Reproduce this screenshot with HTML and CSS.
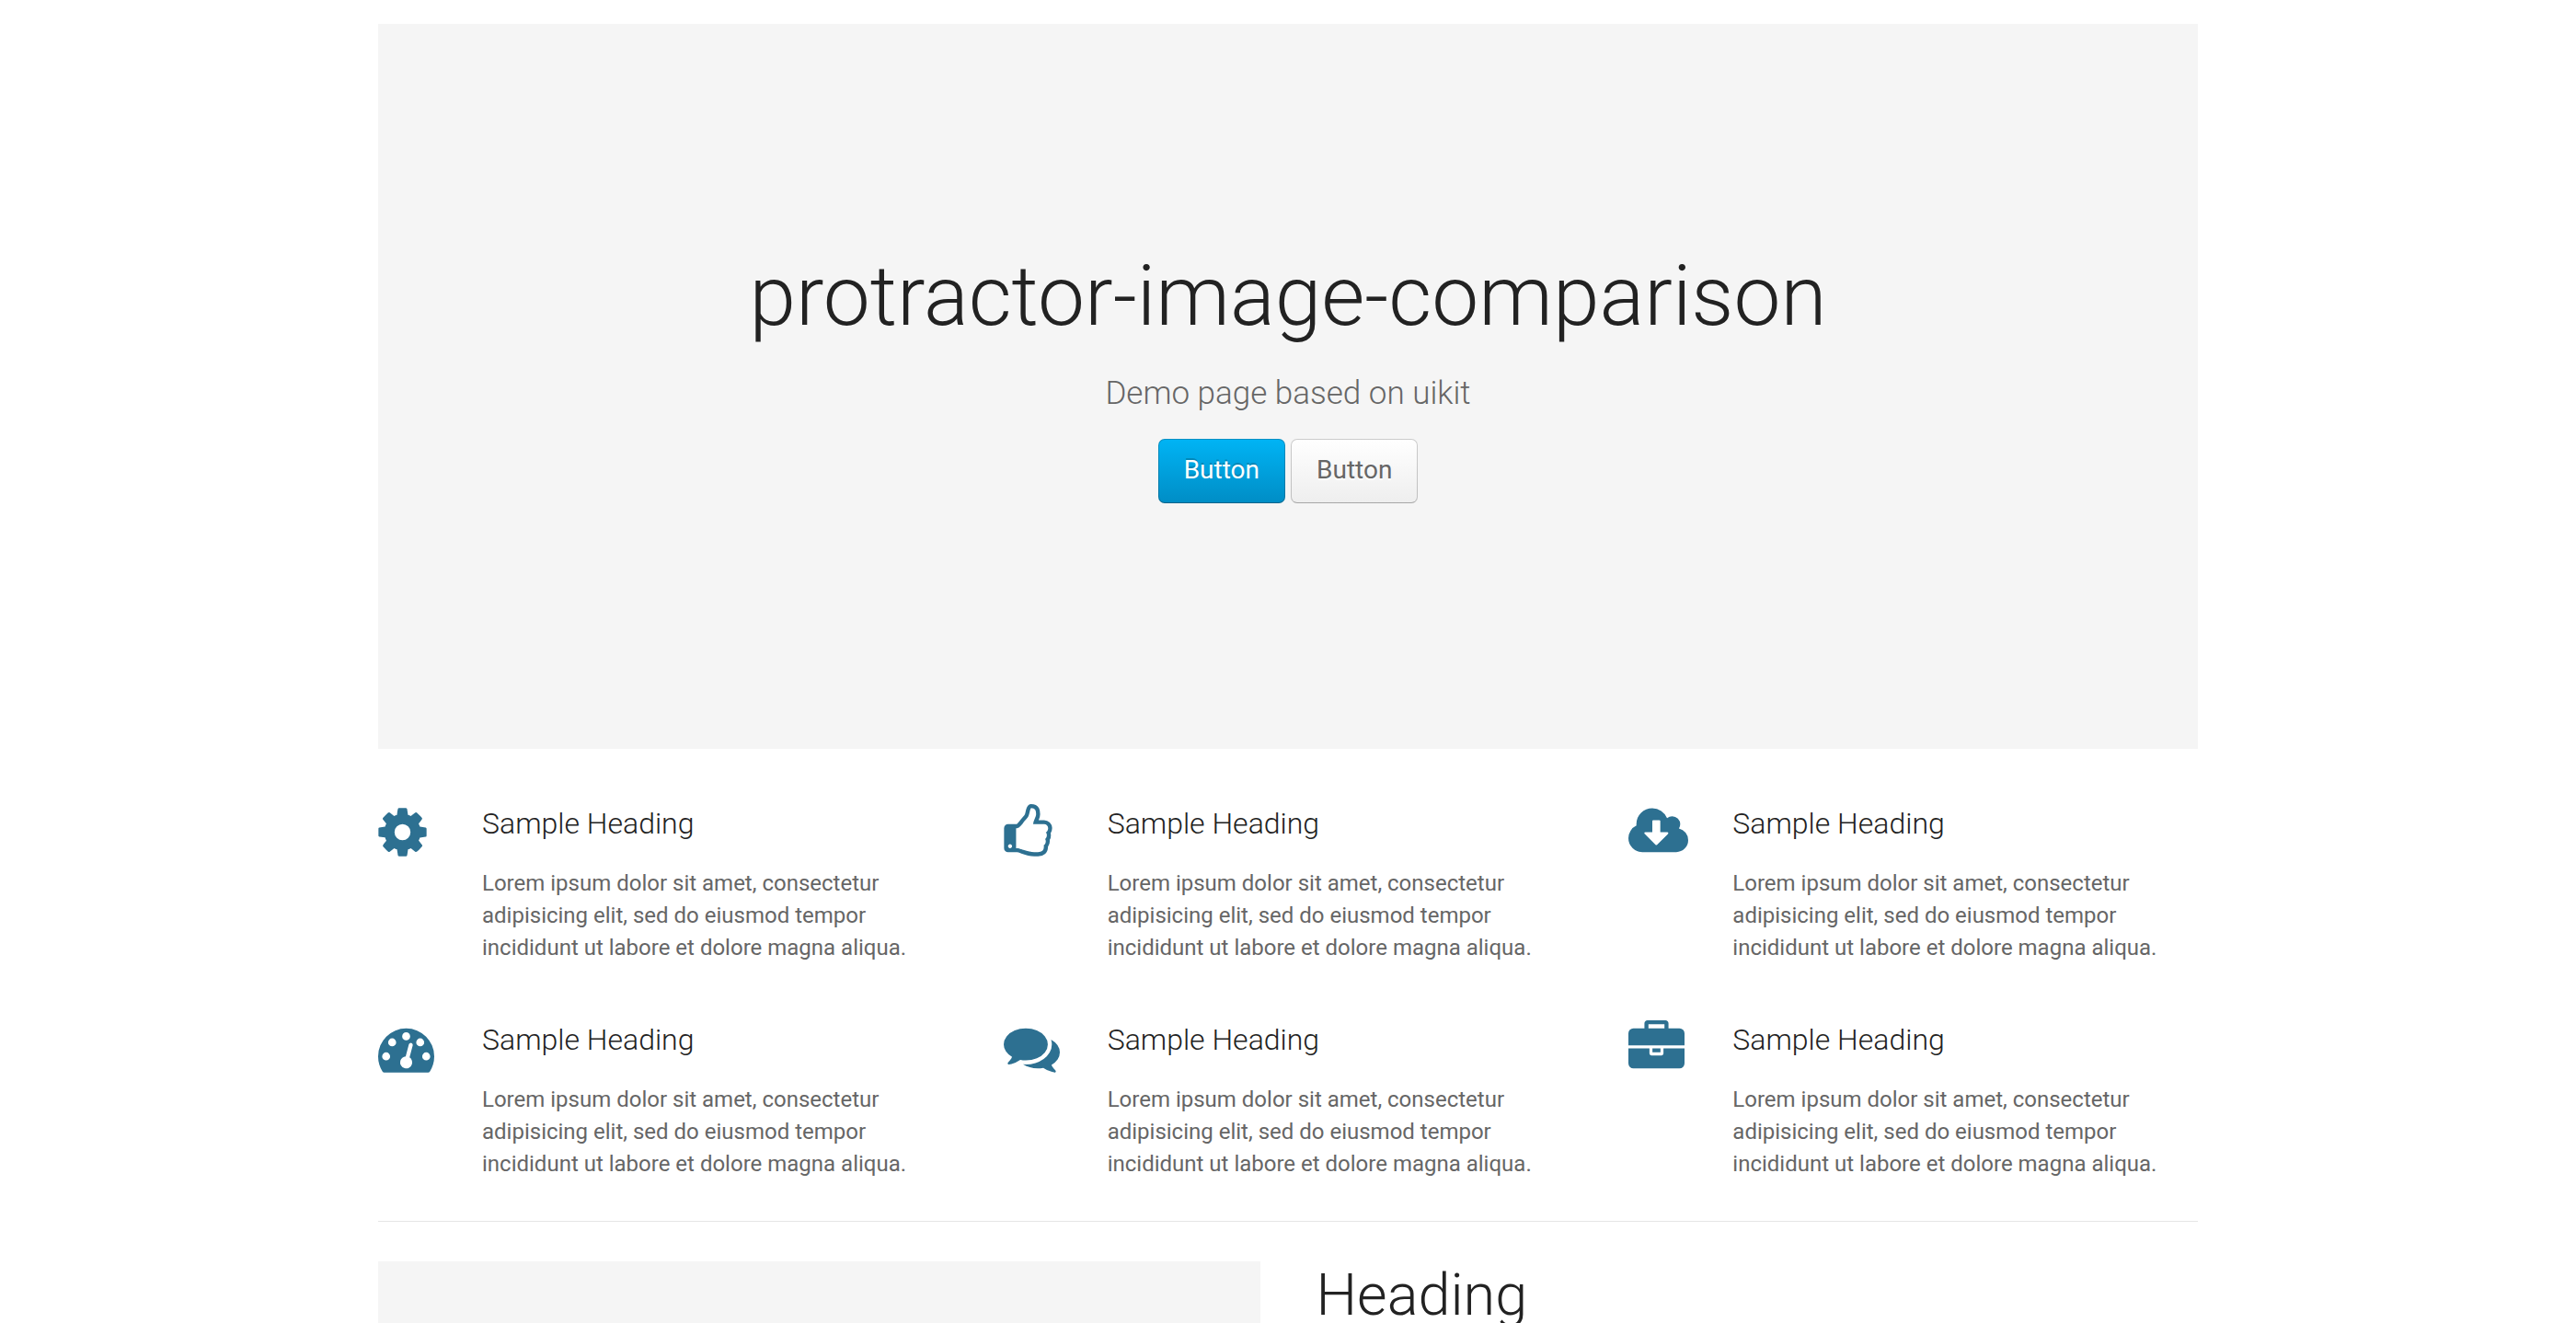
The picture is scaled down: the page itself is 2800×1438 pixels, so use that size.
FILE: index.html
```html
<!DOCTYPE html>
<html lang="en">
<head>
<meta charset="utf-8">
<title>protractor-image-comparison</title>
<link rel="stylesheet" href="styles.css">
</head>
<body>
<svg class="sprite" aria-hidden="true">
  <symbol id="cog" viewBox="128 0 1536 1792"><path d="M1152 896q0-106-75-181t-181-75-181 75-75 181 75 181 181 75 181-75 75-181zm512-109v222q0 12-8 23t-20 13l-185 28q-19 54-39 91 35 50 107 138 10 12 10 25t-9 23q-27 37-99 108t-94 71q-12 0-26-9l-138-108q-44 23-91 38-16 136-29 186-7 28-36 28h-222q-14 0-24.500-8.500t-11.500-21.500l-28-184q-49-16-90-37l-141 107q-10 9-25 9-14 0-25-11-126-114-165-168-7-10-7-23 0-12 8-23 15-21 51-66.500t54-70.500q-27-50-41-99l-183-27q-13-2-21-12.500t-8-23.500v-222q0-12 8-23t19-13l186-28q14-46 39-92-40-57-107-138-10-12-10-24 0-10 9-23 26-36 98.500-107.500t94.500-71.500q13 0 26 10l138 107q44-23 91-38 16-136 29-186 7-28 36-28h222q14 0 24.500 8.500t11.500 21.500l28 184q49 16 90 37l142-107q9-9 24-9 13 0 25 10 129 119 165 170 7 8 7 22 0 12-8 23-15 21-51 66.500t-54 70.500q26 50 41 98l183 28q13 2 21 12.500t8 23.500z"/></symbol>
  <symbol id="thumbs-up" viewBox="128 0 1536 1792"><path d="M384 1344q0-26-19-45t-45-19-45 19-19 45 19 45 45 19 45-19 19-45zm1152-576q0-51-39-89.500t-89-38.500h-352q0-58 48-159.500t48-160.500q0-98-32-145t-128-47q-26 26-38 85t-30.500 125.500-59.500 109.500q-22 23-77 91-4 5-23 30t-31.500 41-34.500 42.500-40 44-38.500 35.500-40 27-35.500 9h-32v640h32q13 0 31.500 3t33 6.500 38 11 35 11.500 35.500 12.500 29 10.500q211 73 342 73h121q192 0 192-167 0-26-5-56 30-16 47.500-52.500t17.500-73.500-18-69q53-50 53-119 0-25-10-55.500t-25-47.500q32-1 53.500-47t21.500-81zm128-1q0 89-49 163 9 33 9 69 0 77-38 144 3 21 3 43 0 101-60 178 1 139-85 219.500t-227 80.500h-129q-96 0-189.500-22.500t-216.500-65.500q-116-40-138-40h-288q-53 0-90.500-37.500t-37.500-90.500v-640q0-53 37.500-90.500t90.500-37.500h274q36-24 137-155 58-75 107-128 24-25 35.500-85.500t30.500-126.500 62-108q39-37 90-37 84 0 151 32.500t102 101.500 35 186q0 93-48 192h176q104 0 180 76t76 179z"/></symbol>
  <symbol id="cloud-download" viewBox="0 0 1920 1792"><path d="M1280 928q0-14-9-23t-23-9h-224v-352q0-13-9.500-22.500t-22.500-9.500h-192q-13 0-22.500 9.500t-9.500 22.500v352h-224q-13 0-22.500 9.500t-9.500 22.500q0 14 9 23l352 352q9 9 23 9t23-9l351-351q10-12 10-24zm640 224q0 159-112.500 271.500t-271.500 112.500h-1088q-185 0-316.500-131.500t-131.500-316.500q0-130 70-240t188-165q-2-30-2-43 0-212 150-362t362-150q156 0 285.500 87t188.500 231q71-62 166-62 106 0 181 75t75 181q0 76-41 138 130 31 213.500 135.500t83.500 238.500z"/></symbol>
  <symbol id="dashboard" viewBox="0 0 1792 1792"><path d="M384 1152q0-53-37.500-90.500t-90.500-37.500-90.500 37.500-37.500 90.500 37.500 90.500 90.500 37.500 90.500-37.500 37.500-90.500zm192-448q0-53-37.500-90.500t-90.500-37.500-90.500 37.500-37.500 90.500 37.500 90.500 90.500 37.500 90.500-37.500 37.500-90.500zm428 481l101-382q6-26-7.500-48.500t-38.500-29.500-48 6.500-30 39.500l-101 382q-60 5-107 43.500t-63 98.500q-20 77 20 146t117 89 146-20 89-117q16-60-6-117t-72-91zm660-33q0-53-37.500-90.500t-90.500-37.500-90.500 37.500-37.500 90.500 37.500 90.500 90.500 37.500 90.500-37.500 37.500-90.500zm-640-640q0-53-37.500-90.500t-90.500-37.500-90.500 37.500-37.500 90.500 37.500 90.500 90.500 37.500 90.500-37.500 37.500-90.500zm448 192q0-53-37.500-90.500t-90.500-37.500-90.500 37.500-37.500 90.500 37.500 90.500 90.500 37.500 90.500-37.500 37.500-90.500zm320 448q0 261-141 483-19 29-54 29h-1402q-35 0-54-29-141-221-141-483 0-182 71-348t191-286 286-191 348-71 348 71 286 191 191 286 71 348z"/></symbol>
  <symbol id="comments" viewBox="0 0 1792 1792"><path d="M1408 768q0 139-94 257t-256.500 186.500-353.500 68.500q-86 0-176-16-124 88-278 128-36 9-86 16h-3q-11 0-20.500-8t-11.500-21q-1-3-1-6.500t.5-6.500 2-6l2.500-5 3.500-5.500 4-5 4.500-5 4-4.500q5-6 23-25t26-29.500 22.500-29 25-38.500 20.500-44q-124-72-195-177t-71-224q0-139 94-257t256.500-186.500 353.500-68.500 353.500 68.500 256.500 186.500 94 257zm384 256q0 120-71 224.500t-195 176.500q10 24 20.500 44t25 38.500 22.500 29 26 29.500 23 25q1 1 4 4.500t4.500 5 4 5 3.500 5.500l2.500 5 2 6 .5 6.500-1 6.500q-3 14-13 22t-22 7q-50-7-86-16-154-40-278-128-90 16-176 16-271 0-472-132 58 4 88 4 161 0 309-45t264-129q125-92 192-212t67-254q0-77-23-152 129 71 204 178t75 230z"/></symbol>
  <symbol id="briefcase" viewBox="0 0 1792 1792"><path d="M640 256h512v-128h-512v128zm1152 640v480q0 66-47 113t-113 47h-1472q-66 0-113-47t-47-113v-480h672v160q0 26 19 45t45 19h320q26 0 45-19t19-45v-160h672zm-768 0v128h-256v-128h256zm768-480v384h-1792v-384q0-66 47-113t113-47h352v-160q0-40 28-68t68-28h576q40 0 68 28t28 68v160h352q66 0 113 47t47 113z"/></symbol>
</svg>

<main class="container">
  <header class="hero">
    <h1 class="hero-title">protractor-image-comparison</h1>
    <p class="hero-lead">Demo page based on uikit</p>
    <div class="hero-actions">
      <button type="button" class="button button-primary">Button</button>
      <button type="button" class="button">Button</button>
    </div>
  </header>

  <section class="features">
    <article class="feature">
      <div class="feature-icon"><svg class="icon icon-narrow" aria-hidden="true"><use href="#cog"/></svg></div>
      <div class="feature-body">
        <h2 class="feature-title">Sample Heading</h2>
        <p class="feature-text">Lorem ipsum dolor sit amet, consectetur adipisicing elit, sed do eiusmod tempor incididunt ut labore et dolore magna aliqua.</p>
      </div>
    </article>
    <article class="feature">
      <div class="feature-icon"><svg class="icon icon-narrow" aria-hidden="true"><use href="#thumbs-up"/></svg></div>
      <div class="feature-body">
        <h2 class="feature-title">Sample Heading</h2>
        <p class="feature-text">Lorem ipsum dolor sit amet, consectetur adipisicing elit, sed do eiusmod tempor incididunt ut labore et dolore magna aliqua.</p>
      </div>
    </article>
    <article class="feature">
      <div class="feature-icon"><svg class="icon icon-wide" aria-hidden="true"><use href="#cloud-download"/></svg></div>
      <div class="feature-body">
        <h2 class="feature-title">Sample Heading</h2>
        <p class="feature-text">Lorem ipsum dolor sit amet, consectetur adipisicing elit, sed do eiusmod tempor incididunt ut labore et dolore magna aliqua.</p>
      </div>
    </article>
    <article class="feature">
      <div class="feature-icon"><svg class="icon" aria-hidden="true"><use href="#dashboard"/></svg></div>
      <div class="feature-body">
        <h2 class="feature-title">Sample Heading</h2>
        <p class="feature-text">Lorem ipsum dolor sit amet, consectetur adipisicing elit, sed do eiusmod tempor incididunt ut labore et dolore magna aliqua.</p>
      </div>
    </article>
    <article class="feature">
      <div class="feature-icon"><svg class="icon" aria-hidden="true"><use href="#comments"/></svg></div>
      <div class="feature-body">
        <h2 class="feature-title">Sample Heading</h2>
        <p class="feature-text">Lorem ipsum dolor sit amet, consectetur adipisicing elit, sed do eiusmod tempor incididunt ut labore et dolore magna aliqua.</p>
      </div>
    </article>
    <article class="feature">
      <div class="feature-icon"><svg class="icon" aria-hidden="true"><use href="#briefcase"/></svg></div>
      <div class="feature-body">
        <h2 class="feature-title">Sample Heading</h2>
        <p class="feature-text">Lorem ipsum dolor sit amet, consectetur adipisicing elit, sed do eiusmod tempor incididunt ut labore et dolore magna aliqua.</p>
      </div>
    </article>
  </section>

  <hr class="divider">

  <section class="split">
    <div class="placeholder"></div>
    <h2 class="split-title">Heading</h2>
  </section>
</main>
</body>
</html>
```

FILE: styles.css
```css
*,
*::before,
*::after {
  box-sizing: border-box;
}

body {
  height: 100vh;
  margin: 0;
  overflow: hidden;
  background: #fff;
  color: #666;
  font: 400 24px/35px Roboto, "Liberation Sans", sans-serif;
}

h1,
h2,
p {
  margin: 0;
}

.sprite {
  display: none;
}

.container {
  max-width: 1978px;
  margin: 0 auto;
  padding-top: 26px;
}

.hero {
  display: flex;
  flex-direction: column;
  align-items: center;
  justify-content: center;
  gap: 26px;
  min-height: 788px;
  padding-bottom: 27px;
  background: #f5f5f5;
  text-align: center;
}

.hero-title {
  color: #222;
  font-size: 91px;
  font-weight: 300;
  line-height: 112px;
}

.hero-lead {
  font-size: 35px;
  font-weight: 300;
  line-height: 47px;
}

.hero-actions {
  display: flex;
  gap: 6px;
}

.button {
  height: 70px;
  padding: 0 27px 2px;
  border: 1px solid rgba(0, 0, 0, 0.2);
  border-bottom-color: rgba(0, 0, 0, 0.3);
  border-radius: 7px;
  background: #f7f7f7 linear-gradient(#fff, #eee) border-box;
  color: #666;
  font: 400 28px/66px Roboto, "Liberation Sans", sans-serif;
  text-shadow: 0 2px 0 #fff;
  cursor: pointer;
}

.button-primary {
  background: #009dd8 linear-gradient(#00b4f5, #008dc5) border-box;
  color: #fff;
  text-shadow: 0 -2px 0 rgba(0, 0, 0, 0.2);
}

.features {
  display: grid;
  grid-template-columns: repeat(3, 1fr);
  gap: 61px;
  margin-top: 60px;
}

.feature {
  display: flex;
  gap: 48px;
}

.feature-icon {
  flex: 0 0 65px;
}

.icon {
  display: block;
  width: 61px;
  height: 61px;
  fill: #2d7091;
}

.icon-narrow {
  width: 53px;
}

.icon-wide {
  width: 65px;
}

.feature-body {
  flex: 1;
}

.feature-title {
  margin-bottom: 27px;
  color: #222;
  font-size: 32px;
  font-weight: 300;
  line-height: 42px;
}

.divider {
  margin: 44px 0 43px;
  border: 0;
  border-top: 1px solid #e5e5e5;
}

.split {
  display: grid;
  grid-template-columns: repeat(2, 1fr);
  gap: 61px;
}

.placeholder {
  min-height: 525px;
  background: #f5f5f5;
}

.split-title {
  color: #222;
  font-size: 63px;
  font-weight: 300;
  line-height: 73px;
}
```
